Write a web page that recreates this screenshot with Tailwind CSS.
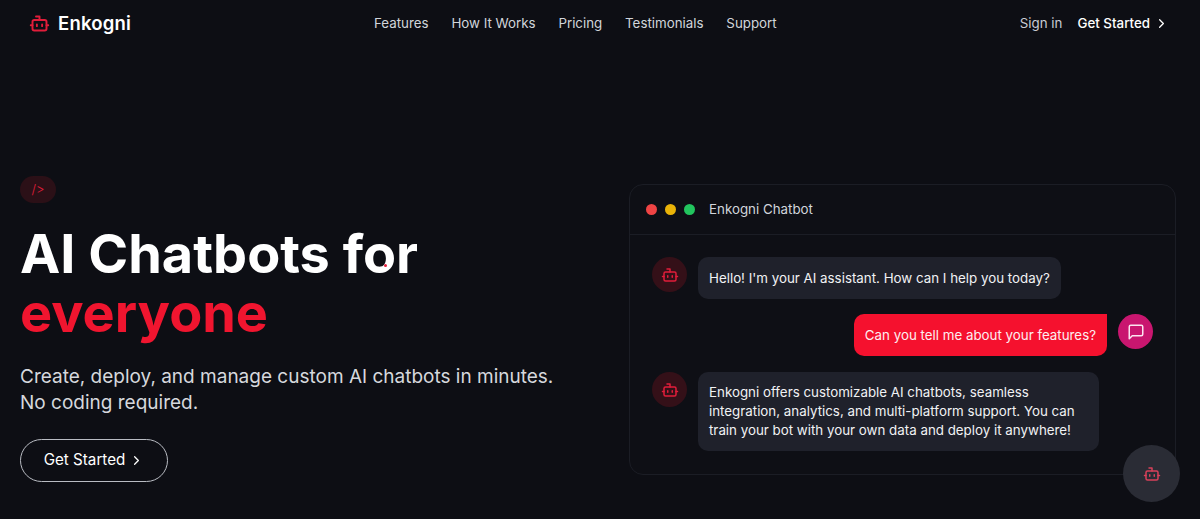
<!DOCTYPE html>
<html lang="en">
<head>
  <meta charset="UTF-8">
  <title>Enkogni</title>
  <script src="https://cdn.jsdelivr.net/npm/@tailwindcss/browser@4"></script>
</head>
<body class="relative h-[519px] overflow-hidden bg-[#0d0e14] font-['Inter',sans-serif] text-white">

  <!-- Nav -->
  <header class="flex h-[47px] items-center pl-[29px] pr-[31px]">
    <a class="flex w-[345px] items-center gap-[8px]">
      <svg class="h-[21px] w-[21px] text-[#e11d3a]" viewBox="0 0 24 24" fill="none" stroke="currentColor" stroke-width="2.2" stroke-linecap="round" stroke-linejoin="round">
        <path d="M12 8V4H8"/><rect x="4" y="8" width="16" height="12" rx="2"/><path d="M2 14h2M20 14h2M15 13v2M9 13v2"/>
      </svg>
      <span class="text-[18.5px] font-semibold tracking-[0.2px]">Enkogni</span>
    </a>
    <nav class="flex gap-[22.8px] text-[13.33px] text-[#d1d5db]">
      <a>Features</a><a>How It Works</a><a>Pricing</a><a>Testimonials</a><a>Support</a>
    </nav>
    <div class="ml-auto flex items-center gap-[15px] text-[13.33px]">
      <a class="text-[#c9ccd3]">Sign in</a>
      <a class="flex items-center gap-[4px] font-medium">Get Started
        <svg class="h-[15px] w-[15px]" viewBox="0 0 24 24" fill="none" stroke="currentColor" stroke-width="2" stroke-linecap="round" stroke-linejoin="round"><path d="m9 18 6-6-6-6"/></svg>
      </a>
    </div>
  </header>

  <main class="flex items-start justify-between pl-[20px] pr-[24px] pt-[129px]">
    <!-- Hero copy -->
    <section class="w-[570px]">
      <div class="flex h-[27px] w-[36px] items-center justify-center rounded-full bg-[#2b1017] text-[13px] font-light text-[#e11d3a]">/&gt;</div>
      <h1 class="relative mt-[21px] text-[54px] font-bold leading-[59px]">
        AI Chatbots for<br><span class="text-[#f0152f]">everyone</span>
        <span class="absolute left-[364px] top-[40px] h-[3px] w-[3px] rounded-full bg-[#e11d3a]"></span>
      </h1>
      <p class="mt-[22px] text-[19px] leading-[26px] text-[#d6d8dd]">Create, deploy, and manage custom AI chatbots in minutes.<br>No coding required.</p>
      <a class="mt-[23px] flex h-[43px] w-[148px] items-center justify-center gap-[4px] rounded-full border border-[#b9bcc3] text-[15.2px]">Get Started
        <svg class="h-[15px] w-[15px]" viewBox="0 0 24 24" fill="none" stroke="currentColor" stroke-width="2" stroke-linecap="round" stroke-linejoin="round"><path d="m9 18 6-6-6-6"/></svg>
      </a>
    </section>

    <!-- Chat card -->
    <section class="mt-[8px] h-[291px] w-[547px] rounded-[14px] border border-[#1b1d25] bg-[#0e0f15]">
      <div class="flex h-[50px] items-center border-b border-[#1b1d25] pl-[16px]">
        <span class="h-[11px] w-[11px] rounded-full bg-[#ef4444]"></span>
        <span class="ml-[8px] h-[11px] w-[11px] rounded-full bg-[#eab308]"></span>
        <span class="ml-[8px] h-[11px] w-[11px] rounded-full bg-[#22c55e]"></span>
        <span class="ml-[14px] text-[13.33px] text-[#d1d5db]">Enkogni Chatbot</span>
      </div>
      <div class="flex flex-col gap-[15px] pl-[22px] pr-[22px] pt-[22px]">
        <div class="flex items-start gap-[11px]">
          <div class="flex h-[35px] w-[35px] items-center justify-center rounded-full bg-[#341018]">
            <svg class="h-[18px] w-[18px] text-[#e11d3a]" viewBox="0 0 24 24" fill="none" stroke="currentColor" stroke-width="2" stroke-linecap="round" stroke-linejoin="round"><path d="M12 8V4H8"/><rect x="4" y="8" width="16" height="12" rx="2"/><path d="M2 14h2M20 14h2M15 13v2M9 13v2"/></svg>
          </div>
          <p class="flex h-[42px] items-center rounded-[10px] bg-[#1f212b] px-[11px] pt-[1px] text-[13.33px] text-[#f1f2f4]">Hello! I'm your AI assistant. How can I help you today?</p>
        </div>
        <div class="flex items-start justify-end gap-[11px]">
          <p class="flex h-[42px] items-center rounded-[10px] rounded-tr-none bg-[#f5112e] px-[11px] pt-[1px] text-[13.33px] text-[#fdeef0]">Can you tell me about your features?</p>
          <div class="flex h-[35px] w-[35px] items-center justify-center rounded-full bg-[#c9166f]">
            <svg class="h-[18px] w-[18px] text-[#fbe4f0]" viewBox="0 0 24 24" fill="none" stroke="currentColor" stroke-width="2" stroke-linecap="round" stroke-linejoin="round"><path d="M21 15a2 2 0 0 1-2 2H7l-4 4V5a2 2 0 0 1 2-2h14a2 2 0 0 1 2 2z"/></svg>
          </div>
        </div>
        <div class="mt-[1px] flex items-start gap-[11px]">
          <div class="flex h-[35px] w-[35px] items-center justify-center rounded-full bg-[#341018]">
            <svg class="h-[18px] w-[18px] text-[#e11d3a]" viewBox="0 0 24 24" fill="none" stroke="currentColor" stroke-width="2" stroke-linecap="round" stroke-linejoin="round"><path d="M12 8V4H8"/><rect x="4" y="8" width="16" height="12" rx="2"/><path d="M2 14h2M20 14h2M15 13v2M9 13v2"/></svg>
          </div>
          <p class="w-[401px] rounded-[10px] bg-[#1f212b] px-[11px] py-[11px] text-[13.33px] leading-[19px] text-[#f1f2f4]">Enkogni offers customizable AI chatbots, seamless integration, analytics, and multi-platform support. You can train your bot with your own data and deploy it anywhere!</p>
        </div>
      </div>
    </section>
  </main>

  <!-- Floating chat button -->
  <button class="absolute left-[1123px] top-[445px] flex h-[57px] w-[57px] items-center justify-center rounded-full bg-[#2a2c35]">
    <svg class="h-[18px] w-[18px] text-[#d8405a]" viewBox="0 0 24 24" fill="none" stroke="currentColor" stroke-width="2" stroke-linecap="round" stroke-linejoin="round"><path d="M12 8V4H8"/><rect x="4" y="8" width="16" height="12" rx="2"/><path d="M2 14h2M20 14h2M15 13v2M9 13v2"/></svg>
  </button>

</body>
</html>
